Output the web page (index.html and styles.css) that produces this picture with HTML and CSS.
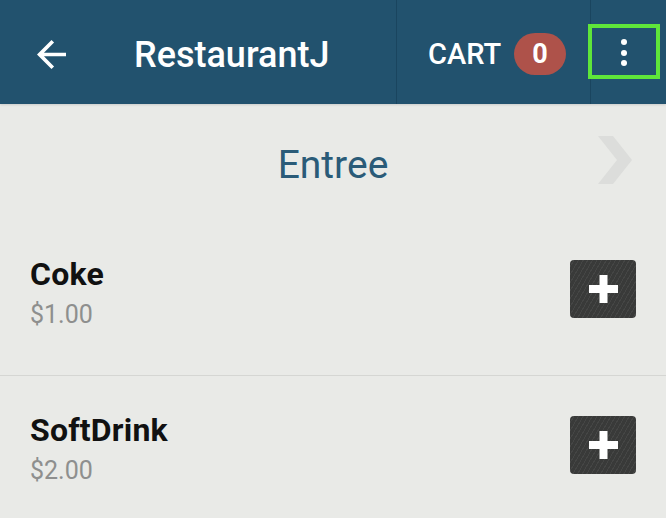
FILE: index.html
```html
<!DOCTYPE html>
<html lang="en">
<head>
<meta charset="utf-8">
<title>RestaurantJ</title>
<link rel="stylesheet" href="styles.css">
</head>
<body>
<div class="app">
  <header class="topbar">
    <button class="back" aria-label="Back">
      <svg class="back-icon" viewBox="4 4 16 16" width="29" height="29" aria-hidden="true">
        <path d="M20 11H7.83l5.59-5.59L12 4l-8 8 8 8 1.41-1.41L7.83 13H20v-2z" fill="#fff"/>
      </svg>
    </button>
    <h1 class="title">RestaurantJ</h1>
    <div class="cart">
      <span class="cart-label">CART</span>
      <span class="badge">0</span>
    </div>
    <div class="menu">
      <span class="dots"><i></i><i></i><i></i></span>
      <span class="focus-ring"></span>
    </div>
  </header>

  <nav class="category">
    <span class="cat-spacer"></span>
    <span class="cat-name">Entree</span>
    <svg class="chev" viewBox="0 0 34 48" width="34" height="48" aria-hidden="true">
      <polygon points="0,0 15,0 34,24 15,48 0,48 19,24" fill="#dcdddb"/>
    </svg>
  </nav>

  <ul class="items">
    <li class="item">
      <div class="item-text">
        <div class="item-name">Coke</div>
        <div class="item-price">$1.00</div>
      </div>
      <button class="add" aria-label="Add Coke">
        <svg viewBox="0 0 29 28" width="29" height="28" aria-hidden="true">
          <rect x="0" y="10" width="29" height="8" fill="#fff"/>
          <rect x="10.5" y="0" width="8" height="28" fill="#fff"/>
        </svg>
      </button>
    </li>
    <li class="item">
      <div class="item-text">
        <div class="item-name">SoftDrink</div>
        <div class="item-price">$2.00</div>
      </div>
      <button class="add" aria-label="Add SoftDrink">
        <svg viewBox="0 0 29 28" width="29" height="28" aria-hidden="true">
          <rect x="0" y="10" width="29" height="8" fill="#fff"/>
          <rect x="10.5" y="0" width="8" height="28" fill="#fff"/>
        </svg>
      </button>
    </li>
  </ul>
</div>
</body>
</html>
```
FILE: styles.css
```css
* { box-sizing: border-box; }

html, body {
  margin: 0;
  padding: 0;
  background: #e9eae7;
  font-family: Roboto, "Noto Sans", "Liberation Sans", sans-serif;
}

.app {
  width: 666px;
  height: 518px;
  overflow: hidden;
  background: #e9eae7;
}

/* ---------- top bar ---------- */
.topbar {
  height: 104px;
  background: #22526e;
  display: flex;
  align-items: stretch;
  color: #fff;
  box-shadow: 0 1px 2px rgba(0, 0, 0, 0.12);
  position: relative;
}

.back {
  flex: none;
  border: 0;
  background: transparent;
  padding: 4px 0 0 37px;
  margin: 0;
  display: flex;
  align-items: center;
  cursor: pointer;
}

.back-icon { display: block; }

.title {
  flex: 1;
  min-width: 0;
  margin: 0 0 0 68px;
  padding-top: 5px;
  display: flex;
  align-items: center;
  font-size: 36px;
  font-weight: 500;
  color: #fff;
  white-space: nowrap;
}

.cart {
  flex: none;
  width: 195px;
  border-left: 1px solid #1a455f;
  border-right: 1px solid #1a455f;
  display: flex;
  align-items: center;
  padding: 4px 0 0 31px;
  gap: 13px;
}

.cart-label {
  font-size: 29px;
  font-weight: 500;
  color: #fff;
}

.badge {
  width: 52px;
  height: 42px;
  border-radius: 21px;
  background: #ae524a;
  color: #fff;
  font-size: 27px;
  font-weight: 700;
  display: flex;
  align-items: center;
  justify-content: center;
}

.menu {
  flex: none;
  width: 75px;
  position: relative;
  display: flex;
  align-items: center;
  justify-content: center;
  padding-right: 9px;
}

.dots {
  display: flex;
  flex-direction: column;
  gap: 4.5px;
  padding-top: 1px;
}

.dots i {
  display: block;
  width: 6px;
  height: 6px;
  border-radius: 50%;
  background: #fff;
}

.focus-ring {
  position: absolute;
  left: -3px;
  top: 24px;
  width: 72px;
  height: 55px;
  border: 4px solid #5fe63a;
}

/* ---------- category ---------- */
.category {
  height: 116px;
  padding-top: 7px;
  display: grid;
  grid-template-columns: 1fr auto 1fr;
  align-items: center;
}

.cat-name {
  font-size: 39px;
  line-height: 45px;
  color: #2a5b78;
}

.chev {
  justify-self: end;
  margin-right: 34px;
  margin-bottom: 12px;
  display: block;
}

/* ---------- items ---------- */
.items {
  list-style: none;
  margin: 0;
  padding: 0;
}

.item {
  height: 156px;
  border-bottom: 1px solid #d5d6d3;
  display: flex;
  align-items: flex-start;
  justify-content: space-between;
  padding: 35px 30px 0 30px;
}

.item-name {
  font-size: 32px;
  font-weight: 700;
  line-height: 38px;
  color: #111;
  letter-spacing: 0.2px;
}

.item-price {
  margin-top: 3px;
  font-size: 25px;
  line-height: 38px;
  color: #8e8f8e;
}

.add {
  margin-top: 5px;
  width: 66px;
  height: 58px;
  border: 0;
  border-radius: 4px;
  padding: 0;
  display: flex;
  align-items: center;
  justify-content: center;
  background-color: #393a39;
  background-image: repeating-linear-gradient(120deg, rgba(255,255,255,0) 0 3px, rgba(255,255,255,0.06) 3px 4px);
  cursor: pointer;
}

.add svg { display: block; }
```
